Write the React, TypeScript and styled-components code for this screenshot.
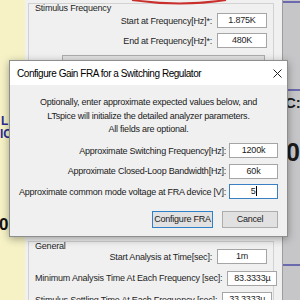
import React from "react";
import styled, { createGlobalStyle } from "styled-components";

const GlobalStyle = createGlobalStyle`
  html, body {
    margin: 0;
    padding: 0;
    background: #c6c6c8;
  }
  body {
    font-family: "Liberation Sans", Arial, sans-serif;
  }
`;

const Desktop = styled.div`
  position: relative;
  width: 300px;
  height: 300px;
  overflow: hidden;
  display: grid;
  grid-template-columns: 25px 258px 17px;
`;

const SchematicStrip = styled.div<{ $bg: string }>`
  position: relative;
  background: ${(p) => p.$bg};
  overflow: hidden;
`;

const SchematicText = styled.span<{
  $color: string;
  $size: number;
  $top: number;
  $left: number;
}>`
  position: absolute;
  top: ${(p) => p.$top}px;
  left: ${(p) => p.$left}px;
  color: ${(p) => p.$color};
  font-size: ${(p) => p.$size}px;
  line-height: 0.9;
  font-weight: 700;
  font-family: "Liberation Sans", Arial, sans-serif;
  white-space: pre;
`;

const Wire = styled.div<{ $top: number }>`
  position: absolute;
  left: 0;
  right: 0;
  top: ${(p) => p.$top}px;
  height: 2px;
  background: #6b6aae;
`;

const BackWindow = styled.div`
  box-sizing: border-box;
  background: #f0f0f0;
  border-right: 1px solid #9c9c9c;
  padding: 3px 8px 0 3px;
  display: flex;
  flex-direction: column;
  gap: 5px;
  font-size: 9px;
  letter-spacing: -0.2px;
  color: #1e1e1e;
`;

const GroupBox = styled.div<{ $height?: number }>`
  box-sizing: border-box;
  border: 1px solid #d2d2d2;
  padding: 0 6px;
  display: flex;
  flex-direction: column;
  ${(p) => (p.$height ? `height: ${p.$height}px;` : "flex: 1;")}
`;

const GroupTitle = styled.div<{ $after: number }>`
  line-height: 9px;
  height: 9px;
  margin-bottom: ${(p) => p.$after}px;
`;

const FieldList = styled.div<{ $gap: number }>`
  display: flex;
  flex-direction: column;
  gap: ${(p) => p.$gap}px;
`;

const FieldRow = styled.div`
  display: grid;
  grid-template-columns: 1fr 50px;
  column-gap: 5px;
  align-items: center;
  height: 15px;
`;

const FieldLabel = styled.span`
  text-align: right;
  white-space: nowrap;
`;

const FieldBox = styled.div<{ $focused?: boolean }>`
  box-sizing: border-box;
  height: 15px;
  border: 1px solid ${(p) => (p.$focused ? "#3a7fc1" : "#a5a5a5")};
  background: #fff;
  text-align: center;
  line-height: 13px;
  white-space: nowrap;
`;

const WideButton = styled.div`
  box-sizing: border-box;
  margin: 7px 0 0 27px;
  width: 203px;
  height: 16px;
  border: 1px solid #adadad;
  background: #e1e1e1;
  text-align: center;
  line-height: 16px;
`;

const Annotation = styled.svg`
  position: absolute;
  left: 130px;
  top: 0;
`;

const Dialog = styled.div`
  position: absolute;
  left: 9px;
  top: 60px;
  width: 279px;
  box-sizing: border-box;
  border: 1px solid #8e8e8e;
  background: #f0f0f0;
  box-shadow: 0 2px 8px rgba(0, 0, 0, 0.35);
  color: #1a1a1a;
`;

const TitleBar = styled.div`
  height: 24px;
  background: #fff;
  display: flex;
  align-items: center;
  justify-content: space-between;
  padding-left: 7px;
`;

const Title = styled.span`
  font-size: 10px;
  letter-spacing: -0.45px;
  color: #000;
`;

const CloseButton = styled.div`
  width: 20px;
  height: 24px;
  display: flex;
  align-items: center;
  justify-content: center;
`;

const DialogBody = styled.div`
  padding: 11px 9px 8px;
  font-size: 9px;
  letter-spacing: -0.23px;
`;

const Message = styled.div`
  text-align: center;
  line-height: 13.5px;
`;

const DialogFields = styled.div`
  margin-top: 6.5px;
  display: flex;
  flex-direction: column;
  gap: 5.5px;
`;

const DialogRow = styled.div`
  display: grid;
  grid-template-columns: 1fr 49px;
  column-gap: 3px;
  align-items: center;
  height: 15px;
`;

const Caret = styled.span`
  display: inline-block;
  width: 1px;
  height: 10px;
  background: #000;
  vertical-align: -2px;
`;

const ButtonRow = styled.div`
  margin-top: 12px;
  display: flex;
  justify-content: flex-end;
  gap: 9px;
`;

const PushButton = styled.div<{ $width: number; $default?: boolean }>`
  box-sizing: border-box;
  width: ${(p) => p.$width}px;
  height: 17px;
  border: 1px solid ${(p) => (p.$default ? "#2f7fc9" : "#adadad")};
  background: #e1e1e1;
  text-align: center;
  line-height: 15px;
`;

const stimulus = [
  { label: "Start at Frequency[Hz]*:", value: "1.875K" },
  { label: "End at Frequency[Hz]*:", value: "480K" },
];

const general = [
  { label: "Start Analysis at Time[sec]:", value: "1m" },
  { label: "Minimum Analysis Time At Each Frequency [sec]:", value: "83.3333µ" },
  { label: "Stimulus Settling Time At Each Frequency [sec]:", value: "33.3333µ" },
];

const approx = [
  { label: "Approximate Switching Frequency[Hz]:", value: "1200k" },
  { label: "Approximate Closed-Loop Bandwidth[Hz]:", value: "60k" },
];

export default function App() {
  return (
    <>
      <GlobalStyle />
      <Desktop>
        <SchematicStrip $bg="#f6f2c6">
          <SchematicText $color="#2b2a96" $size={12} $top={116} $left={1}>
            L
          </SchematicText>
          <SchematicText $color="#2b2a96" $size={12} $top={129} $left={0}>
            IC
          </SchematicText>
          <SchematicText $color="#111" $size={17} $top={217} $left={-1}>
            0.
          </SchematicText>
        </SchematicStrip>

        <BackWindow>
          <GroupBox $height={233}>
            <GroupTitle $after={0}>Stimulus Frequency</GroupTitle>
            <FieldList $gap={5}>
              {stimulus.map((f) => (
                <FieldRow key={f.label}>
                  <FieldLabel>{f.label}</FieldLabel>
                  <FieldBox>{f.value}</FieldBox>
                </FieldRow>
              ))}
            </FieldList>
            <WideButton>Re-initialize Fields for Switching Regulator</WideButton>
          </GroupBox>
          <GroupBox>
            <GroupTitle $after={-2}>General</GroupTitle>
            <FieldList $gap={6.5}>
              {general.map((f) => (
                <FieldRow key={f.label}>
                  <FieldLabel>{f.label}</FieldLabel>
                  <FieldBox>{f.value}</FieldBox>
                </FieldRow>
              ))}
            </FieldList>
          </GroupBox>
        </BackWindow>

        <SchematicStrip $bg="#c6c6c8">
          <Wire $top={1} />
          <Wire $top={89} />
          <Wire $top={264} />
          <SchematicText $color="#1a1a1a" $size={15} $top={96} $left={2}>
            C:
          </SchematicText>
          <SchematicText $color="#1a1a1a" $size={25} $top={141} $left={3}>
            0
          </SchematicText>
        </SchematicStrip>

        <Annotation width="110" height="6" viewBox="0 0 110 6">
          <path d="M2 0 Q 50 7 96 0" fill="none" stroke="#c9302c" strokeWidth="2" />
        </Annotation>

        <Dialog>
          <TitleBar>
            <Title>Configure Gain FRA for a Switching Regulator</Title>
            <CloseButton>
              <svg width="9" height="9" viewBox="0 0 9 9">
                <path d="M0.5 0.5 L8.5 8.5 M8.5 0.5 L0.5 8.5" stroke="#222" strokeWidth="1" />
              </svg>
            </CloseButton>
          </TitleBar>
          <DialogBody>
            <Message>
              Optionally, enter approximate expected values below, and
              <br />
              LTspice will initialize the detailed analyzer parameters.
              <br />
              All fields are optional.
            </Message>
            <DialogFields>
              {approx.map((f) => (
                <DialogRow key={f.label}>
                  <FieldLabel>{f.label}</FieldLabel>
                  <FieldBox>{f.value}</FieldBox>
                </DialogRow>
              ))}
              <DialogRow>
                <FieldLabel>Approximate common mode voltage at FRA device [V]:</FieldLabel>
                <FieldBox $focused>
                  5<Caret />
                </FieldBox>
              </DialogRow>
            </DialogFields>
            <ButtonRow>
              <PushButton $width={61} $default>
                Configure FRA
              </PushButton>
              <PushButton $width={56}>Cancel</PushButton>
            </ButtonRow>
          </DialogBody>
        </Dialog>
      </Desktop>
    </>
  );
}
